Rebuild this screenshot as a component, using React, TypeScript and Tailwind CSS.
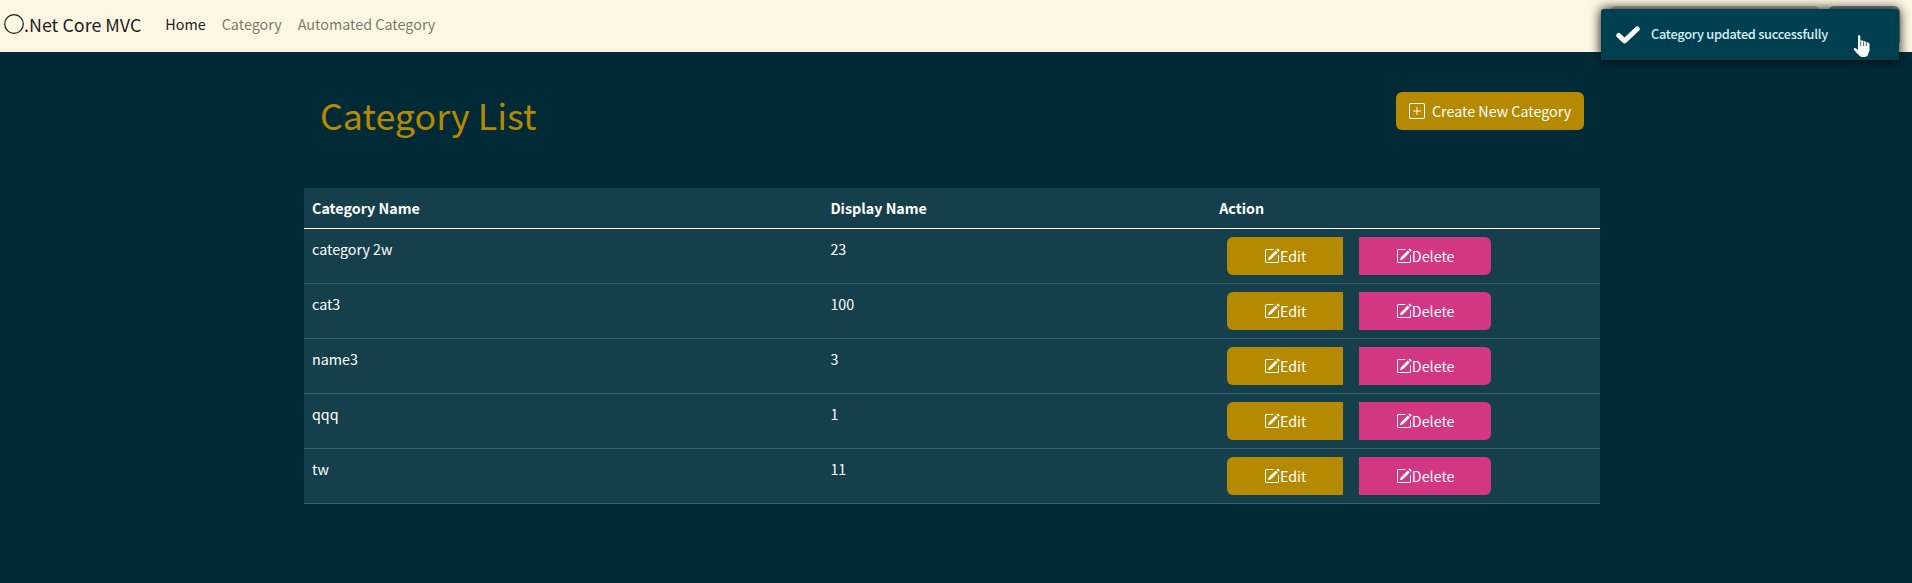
import { BsPlusSquare, BsPencilSquare } from "react-icons/bs";

const rows = [
  { name: "category 2w", order: 23 },
  { name: "cat3", order: 100 },
  { name: "name3", order: 3 },
  { name: "qqq", order: 1 },
  { name: "tw", order: 11 },
];

function Navbar() {
  return (
    <nav className="flex h-[52px] items-center bg-[#fdf6e3] pl-1">
      <div className="flex items-center pb-[5px]">
        <a className="mr-4 flex items-center text-[17.9px] leading-[30px] text-black/90">
          <svg viewBox="0 0 20 20" className="h-5 w-5" fill="none" stroke="currentColor" strokeWidth="1.2">
            <circle cx="10" cy="10" r="9.3" />
          </svg>
          <span>.Net Core MVC</span>
        </a>
        <div className="flex text-[14.35px] leading-6">
          <a className="px-2 text-black/90">Home</a>
          <a className="px-2 text-black/55">Category</a>
          <a className="px-2 text-black/55">Automated Category</a>
        </div>
      </div>
      <div className="ml-auto flex items-center gap-2 self-stretch pr-3">
        <div className="h-[41px] w-[210px] rounded-md bg-[#ccc5b4]" />
        <div className="h-[41px] w-[72px] rounded-md bg-[#839496]" />
      </div>
    </nav>
  );
}

function Toast() {
  return (
    <div className="absolute top-[9px] right-[13px] flex h-[51px] w-[298px] items-center rounded-t-[3px] bg-[#003f4f] pl-[15px] shadow-[0_0_12px_#000]">
      <svg viewBox="0 0 24 18" className="h-[18px] w-6" fill="none" stroke="#fff" strokeWidth="5" strokeLinecap="round" strokeLinejoin="round">
        <path d="M2.8 9.5 8.5 14.8 21.2 3" />
      </svg>
      <span className="mb-0.5 ml-[11px] text-[12.8px] font-medium tracking-[-0.28px] text-[#d5f0f5]">
        Category updated successfully
      </span>
      <svg viewBox="0 0 17 23" className="absolute top-[26px] left-[252px] h-[23px] w-[17px]" fill="#fff">
        <path d="M5 1C5 0 7.3 0 7.3 1V5.5L10 5.5V6.2L12.7 6.2V7.2L15 7.4C16 7.6 16.5 8.3 16.5 9.3V15.5L14.6 20.5C13 22.5 8 22.5 6.4 20.8L1 15C0 13.5 1.5 12.3 2.7 13.2L5 15Z" />
        <path d="M7.7 6.5V11M10.6 7V11M13.3 8V11" stroke="#003f4f" strokeWidth="0.8" />
      </svg>
    </div>
  );
}

export default function App() {
  return (
    <div className="relative h-[583px] overflow-hidden bg-[#002b36] font-['Noto_Sans_CJK_SC',sans-serif] text-[14.3px] leading-6 text-white">
      <Navbar />
      <main className="ml-[304px] w-[1296px]">
        <header className="flex h-[136px] items-start justify-between px-4">
          <h1 className="pt-[38px] text-[35.8px] leading-12 text-[#b58900]">Category List</h1>
          <button className="mt-10 flex h-[38px] w-[188px] items-center rounded-md bg-[#b58900] pl-[13px] whitespace-nowrap">
            <BsPlusSquare className="mr-[7px] h-4 w-4 shrink-0" />
            Create New Category
          </button>
        </header>
        <table className="w-full table-fixed border-separate border-spacing-0 bg-[#153f4a]">
          <thead>
            <tr className="h-[41px] text-left text-[14.3px] font-bold">
              <th className="w-2/5 border-b border-white px-2">Category Name</th>
              <th className="w-[30%] border-b border-white px-2">Display Name</th>
              <th className="w-[30%] border-b border-white px-2">Action</th>
            </tr>
          </thead>
          <tbody>
            {rows.map((row) => (
              <tr key={row.name} className="h-[55px] align-top">
                <td className="border-b border-[#37606c] p-2">{row.name}</td>
                <td className="border-b border-[#37606c] p-2">{row.order}</td>
                <td className="border-b border-[#37606c] p-2">
                  <div className="ml-2 flex gap-4">
                    <button className="flex h-[38px] w-[116px] items-center justify-center rounded-l-md bg-[#b58900]">
                      <BsPencilSquare className="h-4 w-4" />
                      Edit
                    </button>
                    <button className="flex h-[38px] w-[132px] items-center justify-center rounded-r-md bg-[#d33682]">
                      <BsPencilSquare className="h-4 w-4" />
                      Delete
                    </button>
                  </div>
                </td>
              </tr>
            ))}
          </tbody>
        </table>
      </main>
      <Toast />
    </div>
  );
}
